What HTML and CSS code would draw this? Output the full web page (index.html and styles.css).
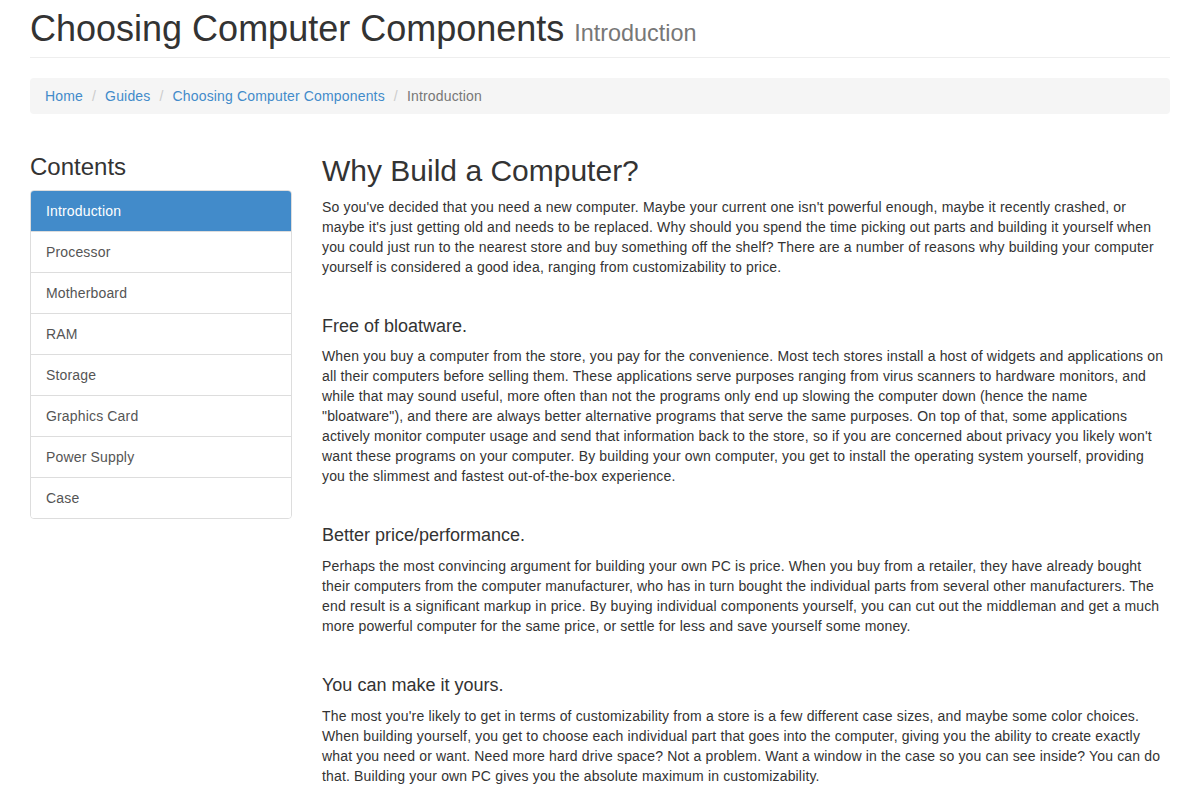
FILE: index.html
```html
<!DOCTYPE html>
<html lang="en">
<head>
<meta charset="utf-8">
<title>Choosing Computer Components - Introduction</title>
<link rel="stylesheet" href="styles.css">
</head>
<body>
<div class="container">
  <div class="page-header">
    <h1>Choosing Computer Components <small>Introduction</small></h1>
  </div>
  <ol class="breadcrumb">
    <li><a href="#">Home</a></li>
    <li><a href="#">Guides</a></li>
    <li><a href="#">Choosing Computer Components</a></li>
    <li class="active">Introduction</li>
  </ol>
  <div class="row">
    <div class="sidebar">
      <h3>Contents</h3>
      <div class="list-group">
        <a href="#" class="list-group-item active">Introduction</a>
        <a href="#" class="list-group-item">Processor</a>
        <a href="#" class="list-group-item">Motherboard</a>
        <a href="#" class="list-group-item">RAM</a>
        <a href="#" class="list-group-item">Storage</a>
        <a href="#" class="list-group-item">Graphics Card</a>
        <a href="#" class="list-group-item">Power Supply</a>
        <a href="#" class="list-group-item">Case</a>
      </div>
    </div>
    <div class="main">
      <h2>Why Build a Computer?</h2>
      <p>So you've decided that you need a new computer. Maybe your current one isn't powerful enough, maybe it recently crashed, or maybe it's just getting old and needs to be replaced. Why should you spend the time picking out parts and building it yourself when you could just run to the nearest store and buy something off the shelf? There are a number of reasons why building your computer yourself is considered a good idea, ranging from customizability to price.</p>
      <h4>Free of bloatware.</h4>
      <p>When you buy a computer from the store, you pay for the convenience. Most tech stores install a host of widgets and applications on all their computers before selling them. These applications serve purposes ranging from virus scanners to hardware monitors, and while that may sound useful, more often than not the programs only end up slowing the computer down (hence the name "bloatware"), and there are always better alternative programs that serve the same purposes. On top of that, some applications actively monitor computer usage and send that information back to the store, so if you are concerned about privacy you likely won't want these programs on your computer. By building your own computer, you get to install the operating system yourself, providing you the slimmest and fastest out-of-the-box experience.</p>
      <h4>Better price/performance.</h4>
      <p>Perhaps the most convincing argument for building your own PC is price. When you buy from a retailer, they have already bought their computers from the computer manufacturer, who has in turn bought the individual parts from several other manufacturers. The end result is a significant markup in price. By buying individual components yourself, you can cut out the middleman and get a much more powerful computer for the same price, or settle for less and save yourself some money.</p>
      <h4>You can make it yours.</h4>
      <p>The most you're likely to get in terms of customizability from a store is a few different case sizes, and maybe some color choices. When building yourself, you get to choose each individual part that goes into the computer, giving you the ability to create exactly what you need or want. Need more hard drive space? Not a problem. Want a window in the case so you can see inside? You can do that. Building your own PC gives you the absolute maximum in customizability.</p>
    </div>
  </div>
</div>
</body>
</html>
```

FILE: styles.css
```css
* { box-sizing: border-box; }
html, body { margin: 0; padding: 0; background: #fff; }
body {
  font-family: "Liberation Sans", Arial, Helvetica, sans-serif;
  font-size: 14px;
  line-height: 1.428571;
  letter-spacing: 0.16px;
  color: #333;
}
h1, h2, h3, h4 { letter-spacing: 0; }
a { color: #428bca; text-decoration: none; }

.container {
  width: 1140px;
  margin-left: 30px;
  padding-top: 9px;
}

.page-header {
  padding-bottom: 8px;
  margin: 0 0 20px;
  border-bottom: 1px solid #eee;
}
.page-header h1 {
  margin: 0;
  font-size: 36px;
  font-weight: 500;
  line-height: 1.1;
  color: #333;
}
.page-header h1 small {
  font-size: 65%;
  font-weight: normal;
  color: #777;
}

.breadcrumb {
  display: flex;
  gap: 4px;
  padding: 9px 15px 7px;
  margin: 0 0 20px;
  list-style: none;
  background: #f5f5f5;
  border-radius: 4px;
}
.breadcrumb li + li::before {
  content: "/\00a0";
  padding: 0 5px;
  color: #ccc;
}
.breadcrumb .active { color: #777; }

.row {
  display: flex;
  gap: 30px;
}
.sidebar {
  width: 262px;
  flex: none;
}
.sidebar h3 {
  margin: 20px 0 10px;
  font-size: 24px;
  font-weight: 500;
  line-height: 1.1;
}
.list-group {
  display: flex;
  flex-direction: column;
  border: 1px solid #ddd;
  border-radius: 4px;
  overflow: hidden;
}
.list-group-item {
  display: block;
  padding: 11px 15px 9px;
  color: #555;
  background: #fff;
}
.list-group-item + .list-group-item { border-top: 1px solid #ddd; }
.list-group-item.active {
  background: #428bca;
  color: #fff;
  margin: -1px -1px 0;
  padding: 12px 16px 9px;
}

.main {
  width: 848px;
  flex: none;
}
.main h2 {
  margin: 20px 0 10px;
  font-size: 30px;
  font-weight: 500;
  line-height: 1.1;
}
.main h4 {
  margin: 39px 0 10px;
  font-size: 18px;
  font-weight: 500;
  line-height: 1.1;
}
.main p { margin: 0 0 9px; padding-top: 1px; }
```
